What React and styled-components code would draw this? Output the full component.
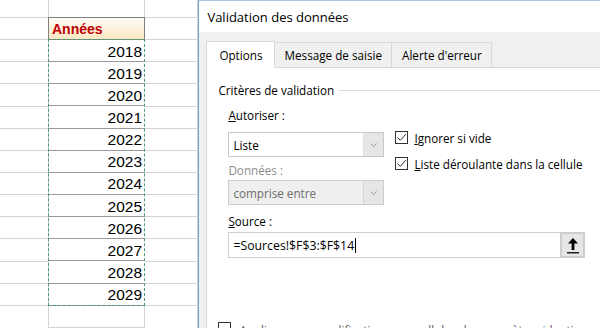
import styled, { createGlobalStyle } from "styled-components";

const GlobalStyle = createGlobalStyle`
    html, body {
        margin: 0;
        padding: 0;
        width: 600px;
        height: 328px;
        overflow: hidden;
        background: #ffffff;
    }

    #root {
        width: 600px;
        height: 328px;
    }
`;

const years = [2018, 2019, 2020, 2021, 2022, 2023, 2024, 2025, 2026, 2027, 2028, 2029];
const ROW = 22.15;

function Check() {
    return (
        <svg width="11" height="11" viewBox="0 0 11 11">
            <path d="M1.5 5.5 L4.3 8.3 L10 2" fill="none" stroke="#333" strokeWidth="1" />
        </svg>
    );
}

function Chevron() {
    return (
        <svg width="7" height="4" viewBox="0 0 7 4">
            <path d="M0.5 0.5 L3.5 3.5 L6.5 0.5" fill="none" stroke="#9a9a9a" strokeWidth="1" />
        </svg>
    );
}

function CollapseIcon() {
    return (
        <svg width="14" height="18" viewBox="0 0 14 18">
            <path d="M7 2 L2 7.5 H5.6 V14 H8.4 V7.5 H12 Z" fill="#000" />
            <rect x="1" y="16" width="12" height="1.5" fill="#222" />
        </svg>
    );
}

export default function App() {
    const sideRows = [18, ...Array(13).fill(ROW), 40];

    return (
        <>
            <GlobalStyle />
            <Page>
                <Sheet>
                    <Column width="49px">
                        {sideRows.map((h, i) => <Cell key={i} style={{ height: h }} />)}
                    </Column>

                    <Column width="96px">
                        <Spacer />
                        <HeaderCell>Années</HeaderCell>
                        <Range>
                            {years.map((y) => <YearCell key={y}>{y}</YearCell>)}
                        </Range>
                        <Cell style={{ height: 22 }} />
                        <Cell style={{ height: 22 }} />
                    </Column>

                    <Column grow>
                        {sideRows.map((h, i) => <Cell key={i} style={{ height: h }} />)}
                    </Column>
                </Sheet>

                <Dialog>
                    <TitleBar>Validation des données</TitleBar>

                    <Body>
                        <Tabs>
                            <Tab active>Options</Tab>
                            <Tab>Message de saisie</Tab>
                            <Tab>Alerte d'erreur</Tab>
                        </Tabs>

                        <Panel>
                            <GroupHeader>
                                <span>Critères de validation</span>
                                <GroupLine />
                            </GroupHeader>

                            <Content>
                                <Row>
                                    <LeftCol>
                                        <Label style={{ marginTop: 9 }}><u>A</u>utoriser :</Label>
                                        <Select style={{ marginTop: 9 }}>
                                            <SelectText>Liste</SelectText>
                                            <SelectButton><Chevron /></SelectButton>
                                        </Select>

                                        <Label disabled style={{ marginTop: 5 }}>Données :</Label>
                                        <Select disabled style={{ marginTop: 2 }}>
                                            <SelectText disabled>comprise entre</SelectText>
                                            <SelectButton disabled><Chevron /></SelectButton>
                                        </Select>
                                    </LeftCol>

                                    <RightCol>
                                        <CheckRow>
                                            <Box><Check /></Box>
                                            <span><u>I</u>gnorer si vide</span>
                                        </CheckRow>
                                        <CheckRow>
                                            <Box><Check /></Box>
                                            <span><u>L</u>iste déroulante dans la cellule</span>
                                        </CheckRow>
                                    </RightCol>
                                </Row>

                                <Label style={{ marginTop: 8 }}><u>S</u>ource :</Label>
                                <Input>
                                    <InputText>=Sources!$F$3:$F$14<Caret /></InputText>
                                    <CollapseButton><CollapseIcon /></CollapseButton>
                                </Input>
                            </Content>

                            <BottomRow>
                                <Box />
                                <span>Appliquer ces modifications aux cellules de paramètres identiques</span>
                            </BottomRow>
                        </Panel>
                    </Body>
                </Dialog>
            </Page>
        </>
    );
}

const Page = styled.div`
    width: 600px;
    height: 328px;

    display: flex;
    flex-direction: row;

    overflow: hidden;
`;

const Sheet = styled.div`
    width: 201px;
    height: 100%;

    display: flex;
    flex-direction: row;

    overflow: hidden;
    background: #ffffff;
`;

const Column = styled.div`
    width: ${(p) => p.width || "auto"};
    flex: ${(p) => (p.grow ? 1 : "none")};

    display: flex;
    flex-direction: column;
`;

const Cell = styled.div`
    box-sizing: border-box;
    flex: none;

    border-right: 1px solid #d4d4d4;
    border-bottom: 1px solid #d4d4d4;
`;

const Spacer = styled.div`
    height: 17px;
    flex: none;

    box-sizing: border-box;
    border-right: 1px solid #d4d4d4;
`;

const HeaderCell = styled.div`
    height: 22px;
    flex: none;
    box-sizing: border-box;

    display: flex;
    align-items: flex-end;

    padding: 0 0 3px 3px;
    margin-left: -1px;

    border: 1px solid #7f7f7f;
    border-bottom: none;
    background: linear-gradient(to bottom, #fffdf8 0%, #fdf0d8 60%, #fbe6c2 100%);

    color: #c00000;
    font-family: "Liberation Sans", Arial, sans-serif;
    font-size: 14px;
    font-weight: 700;
    line-height: 1;
`;

const Range = styled.div`
    display: flex;
    flex-direction: column;

    margin-left: -1px;

    border-top: 1px solid #8a8a8a;
    outline: 1px dashed #4c9a70;
    outline-offset: -1px;
`;

const YearCell = styled.div`
    height: ${ROW}px;
    flex: none;
    box-sizing: border-box;

    display: flex;
    align-items: flex-end;
    justify-content: flex-end;

    padding: 0 3px 2px 0;

    border-bottom: 1px solid #9a9a9a;

    color: #000000;
    font-family: "Liberation Sans", Arial, sans-serif;
    font-size: 15.5px;
    line-height: 1;
`;

const Dialog = styled.div`
    flex: 1;
    height: 100%;
    box-sizing: border-box;

    display: flex;
    flex-direction: column;

    border-left: 1px solid #6f9fd6;
    border-top: 1px solid #a9c4e4;

    font-family: "Open Sans", "Noto Sans", sans-serif;
    font-size: 11.7px;
    color: #000000;
`;

const TitleBar = styled.div`
    height: 31px;
    flex: none;

    display: flex;
    align-items: center;

    padding-left: 8px;

    background: #ffffff;
    font-size: 13px;
`;

const Body = styled.div`
    flex: 1;
    min-height: 0;

    display: flex;
    flex-direction: column;

    padding: 9px 0 0 7px;

    background: #f0f0f0;
`;

const Tabs = styled.div`
    height: 26px;
    flex: none;

    display: flex;
    flex-direction: row;
    align-items: flex-end;
`;

const Tab = styled.div`
    height: ${(p) => (p.active ? 27 : 25)}px;
    box-sizing: border-box;

    display: flex;
    align-items: center;

    padding: ${(p) => (p.active ? "0 11px 0 12px" : "0 9px 0 10px")};
    margin-left: ${(p) => (p.active ? 0 : -1)}px;
    margin-bottom: ${(p) => (p.active ? -1 : 0)}px;

    position: relative;
    z-index: ${(p) => (p.active ? 2 : 1)};

    border: 1px solid #d9d9d9;
    border-bottom: none;
    background: ${(p) => (p.active ? "#ffffff" : "#f0f0f0")};
`;

const Panel = styled.div`
    flex: 1;
    min-height: 0;

    display: flex;
    flex-direction: column;

    padding-left: 11px;

    border-top: 1px solid #d9d9d9;
    border-left: 1px solid #d9d9d9;
    background: #ffffff;

    overflow: hidden;
`;

const GroupHeader = styled.div`
    height: 16px;

    display: flex;
    flex-direction: row;
    align-items: center;

    margin-top: 14px;

    white-space: nowrap;
`;

const GroupLine = styled.div`
    flex: 1;
    height: 1px;

    margin-left: 5px;

    background: #dcdcdc;
`;

const Content = styled.div`
    display: flex;
    flex-direction: column;

    margin-left: 10px;
`;

const Row = styled.div`
    display: flex;
    flex-direction: row;
`;

const LeftCol = styled.div`
    width: 156px;

    display: flex;
    flex-direction: column;
`;

const RightCol = styled.div`
    display: flex;
    flex-direction: column;

    margin-left: 11px;
    padding-top: 33px;
    gap: 13px;
`;

const Label = styled.div`
    height: 16px;
    line-height: 16px;

    color: ${(p) => (p.disabled ? "#8d8d8d" : "#000000")};
    white-space: nowrap;
`;

const Select = styled.div`
    width: 156px;
    height: 25px;
    box-sizing: border-box;

    display: flex;
    flex-direction: row;

    border: 1px solid ${(p) => (p.disabled ? "#cccccc" : "#c8c8c8")};
    background: ${(p) => (p.disabled ? "#efefef" : "#ffffff")};
`;

const SelectText = styled.div`
    flex: 1;

    display: flex;
    align-items: center;

    padding-left: 4px;

    color: ${(p) => (p.disabled ? "#6d6d6d" : "#000000")};
`;

const SelectButton = styled.div`
    width: 19px;

    display: flex;
    align-items: center;
    justify-content: center;

    border-left: 1px solid ${(p) => (p.disabled ? "#d4d4d4" : "#e0e0e0")};
    background: #e6e6e6;
`;

const CheckRow = styled.div`
    height: 13px;

    display: flex;
    flex-direction: row;
    align-items: center;
    gap: 6px;

    white-space: nowrap;
`;

const Box = styled.div`
    width: 13px;
    height: 13px;
    flex: none;
    box-sizing: border-box;

    display: flex;
    align-items: center;
    justify-content: center;

    border: 1px solid #333333;
    background: #ffffff;
`;

const Input = styled.div`
    width: 357px;
    height: 26px;
    box-sizing: border-box;

    display: flex;
    flex-direction: row;

    margin-top: 3px;

    border: 1px solid #cfcfcf;
    background: #ffffff;
`;

const InputText = styled.div`
    flex: 1;

    display: flex;
    align-items: center;

    padding-left: 4px;

    font-size: 12.3px;
    white-space: nowrap;
`;

const Caret = styled.span`
    display: inline-block;
    width: 1px;
    height: 15px;

    margin-left: 1px;

    background: #000000;
`;

const CollapseButton = styled.div`
    width: 25px;
    box-sizing: border-box;

    display: flex;
    align-items: center;
    justify-content: center;

    margin: -1px -1px -1px 0;

    border: 2px solid #cdcdcd;
    background: #e5e5e5;
`;

const BottomRow = styled.div`
    display: flex;
    flex-direction: row;
    align-items: flex-start;
    gap: 8px;

    margin-top: 64px;

    color: #555555;
    white-space: nowrap;
`;
